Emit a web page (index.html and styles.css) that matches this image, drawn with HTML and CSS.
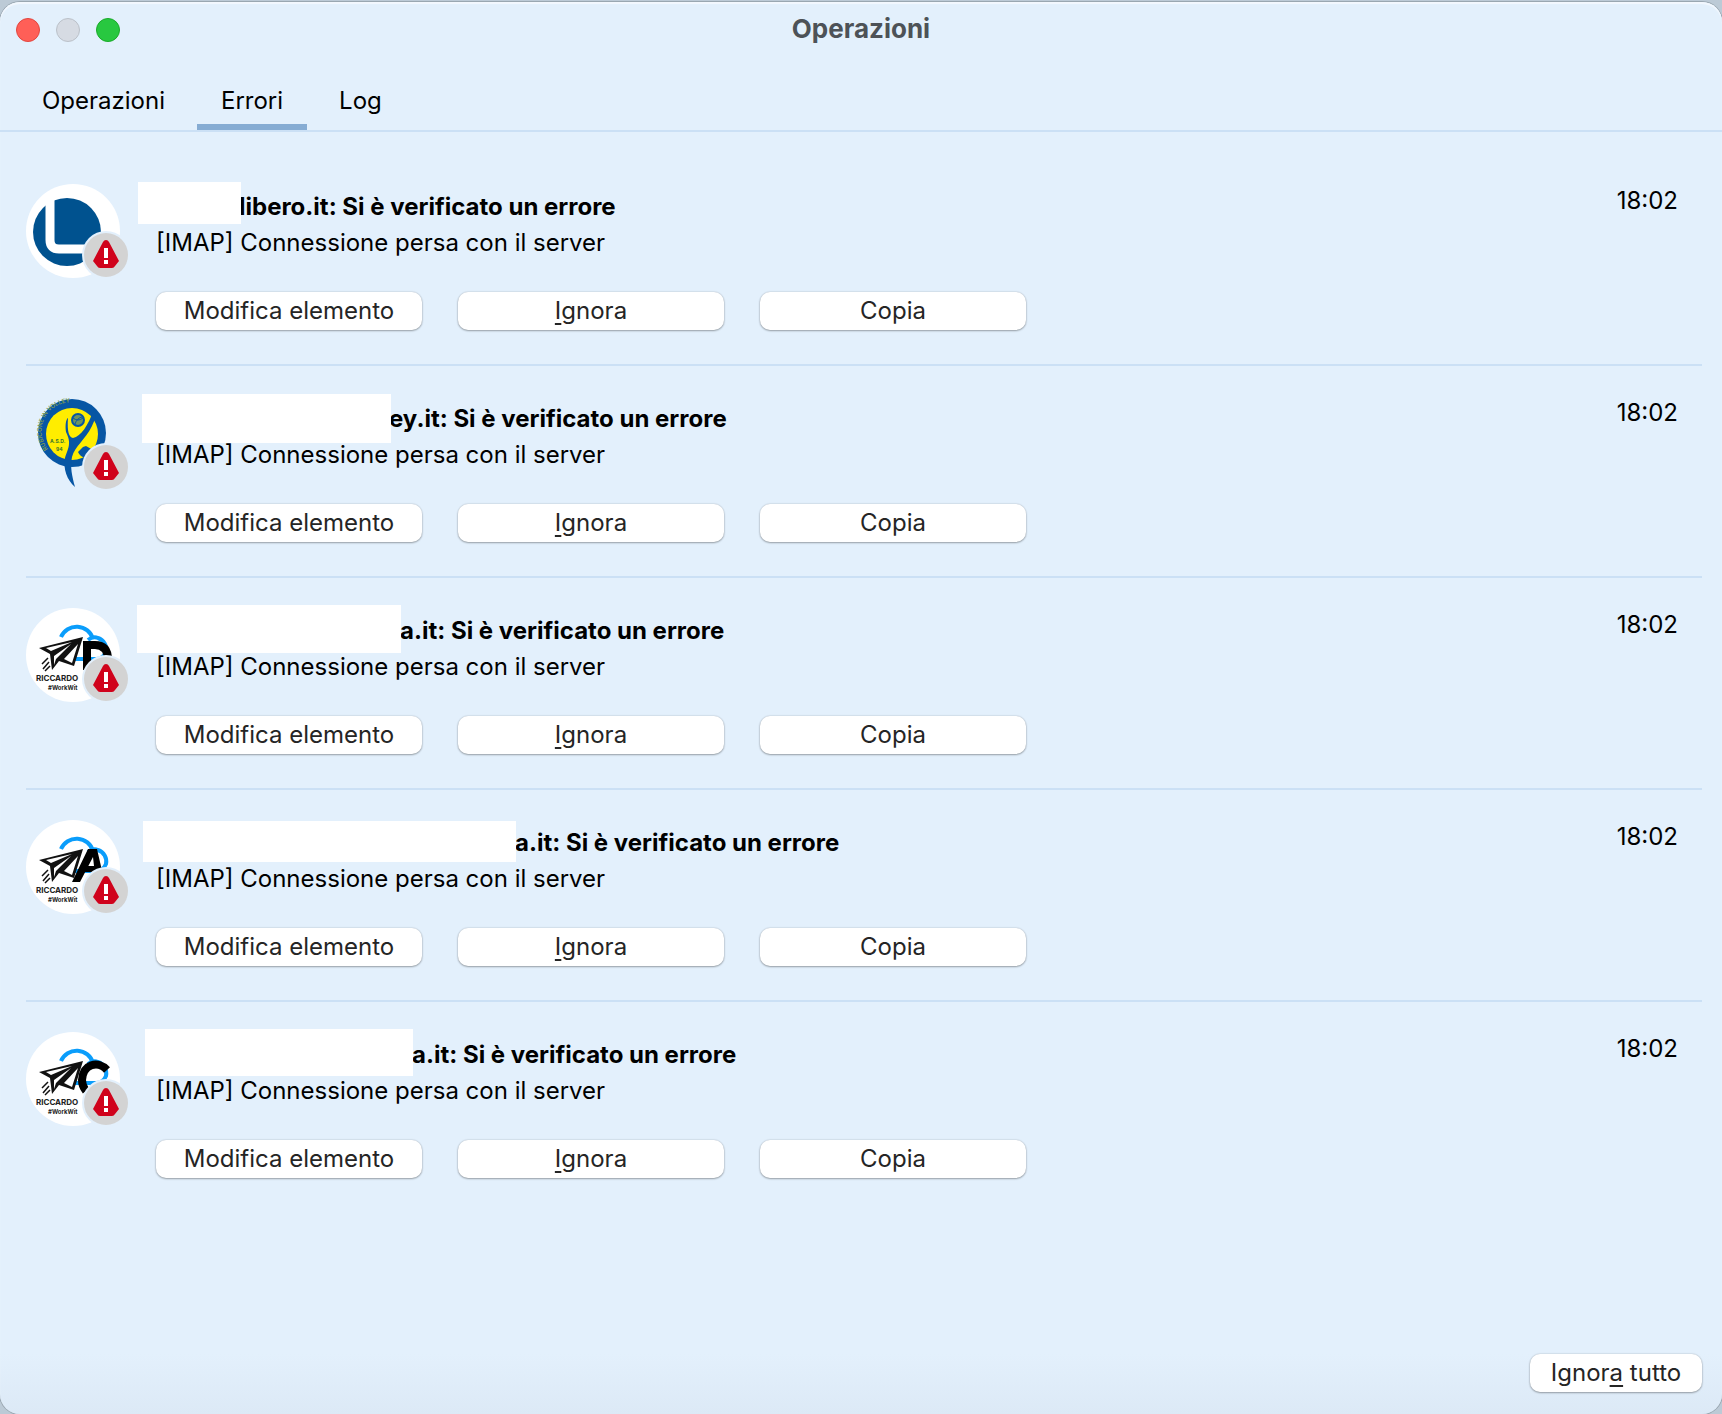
FILE: index.html
```
<!DOCTYPE html>
<html lang="it">

<head>
    <meta charset="UTF-8">
    <meta name="viewport" content="width=device-width, initial-scale=1.0">
    <title>Operazioni</title>
    <link rel="stylesheet" href="styles.css">
</head>

<body>
    <!-- Shared drawings, used by the rows below -->
    <svg class="defs" width="0" height="0" aria-hidden="true">
        <symbol id="alert" viewBox="0 0 48 48">
            <circle cx="24" cy="24" r="24" fill="#e3f0fc" />
            <circle cx="24" cy="24" r="22" fill="#d3d3d3" />
            <path d="M24 9q2 0 3 2l10 19-4 5q-1 2-3 2H18q-2 0-3-2l-4-5 10-19q1-2 3-2z" fill="#d0021b" />
            <path d="M22 17h4v10h-4zM22 29h4v4h-4z" fill="#fff" />
        </symbol>
        <symbol id="plane" viewBox="0 0 94 94">
            <circle cx="47" cy="47" r="47" fill="#fff" />
            <path d="M35 29A17 17 0 0 1 67 31M62 32Q67 28 72 30A12 12 0 0 1 80 44Q77 51 70 51H49" fill="none" stroke="#0a9dfb" stroke-width="4" />
            <path d="M57 29L13 40l11 6 2 16 7-9 15 5z" fill="#111" />
            <path d="M20 40l26-6-21 9zM28 48l17-12-15 15-2 6zM38 51l14-15-6 19z" fill="#fff" />
            <path d="M22 50l-6 6M23 54l-6 7M24 58l-5 5" stroke="#111" stroke-width="1.5" />
            <text x="10" y="73" font-size="8" font-weight="700">RICCARDO</text>
            <text x="22" y="82" font-size="6" font-weight="700">#WorkWit</text>
        </symbol>
    </svg>

    <div class="window">
        <header class="titlebar">
            <div class="lights">
                <button class="light close" aria-label="Chiudi"></button>
                <button class="light minimize" aria-label="Riduci" disabled></button>
                <button class="light zoom" aria-label="Ingrandisci"></button>
            </div>
            <h1>Operazioni</h1>
        </header>

        <nav class="tabs">
            <a href="#operazioni" class="tab">Operazioni</a>
            <a href="#errori" class="tab active">Errori</a>
            <a href="#log" class="tab">Log</a>
        </nav>

        <main class="errors">
            <article class="error">
                <div class="avatar">
                    <svg class="logo" viewBox="0 0 94 94">
                        <circle cx="47" cy="47" r="47" fill="#fff" />
                        <circle cx="41" cy="48" r="34" fill="#00528f" />
                        <path d="M24 10V56Q24 65 33 65H60" fill="none" stroke="#fff" stroke-width="9" />
                    </svg>
                    <svg class="badge"><use href="#alert" /></svg>
                </div>
                <div class="details">
                    <h2 class="title account-1">libero.it: Si è verificato un errore</h2>
                    <p>[IMAP] Connessione persa con il server</p>
                    <div class="actions">
                        <button class="btn">Modifica elemento</button>
                        <button class="btn"><u>I</u>gnora</button>
                        <button class="btn">Copia</button>
                    </div>
                </div>
                <time>18:02</time>
            </article>

            <article class="error">
                <div class="avatar">
                    <svg class="logo" viewBox="0 0 94 94">
                        <circle cx="46" cy="37" r="34" fill="#0756a4" />
                        <circle cx="46" cy="38" r="26" fill="#ffed00" />
                        <path id="ring" d="M22 53A28 28 0 0 1 66 17" fill="none" />
                        <text font-size="6" font-weight="600" fill="#7f9c52"><textPath href="#ring">RUBICONE IN VOLLEY</textPath></text>
                        <path d="M42 22C41 36 43 41 47 42 55 40 62 30 68 13 71 16 70 22 66 30 59 44 49 50 46 61 44 71 46 80 49 91 41 84 37 73 39 62 42 52 46 48 40 36 39 29 40 23 42 22z" fill="#0756a4" />
                        <path d="M60 62q-6-1-8-6l5-5 3-1 7 4v6z" fill="#0756a4" />
                        <circle cx="52" cy="24" r="6" fill="#6d9462" stroke="#0756a4" stroke-width="2" />
                        <path d="M47 22q5 4 10 0M49 28q2-6 7-7" fill="none" stroke="#0756a4" />
                        <text x="24" y="47" font-size="5" font-weight="700" fill="#38762f">A.S.D.</text>
                        <text x="30" y="55" font-size="5" font-weight="700" fill="#38762f">94</text>
                    </svg>
                    <svg class="badge"><use href="#alert" /></svg>
                </div>
                <div class="details">
                    <h2 class="title account-2">ey.it: Si è verificato un errore</h2>
                    <p>[IMAP] Connessione persa con il server</p>
                    <div class="actions">
                        <button class="btn">Modifica elemento</button>
                        <button class="btn"><u>I</u>gnora</button>
                        <button class="btn">Copia</button>
                    </div>
                </div>
                <time>18:02</time>
            </article>

            <article class="error">
                <div class="avatar">
                    <svg class="logo" viewBox="0 0 94 94">
                        <use href="#plane" />
                        <path d="M61 62V37H69Q82 37 82 52" fill="none" stroke="#000" stroke-width="8" />
                    </svg>
                    <svg class="badge"><use href="#alert" /></svg>
                </div>
                <div class="details">
                    <h2 class="title account-3">a.it: Si è verificato un errore</h2>
                    <p>[IMAP] Connessione persa con il server</p>
                    <div class="actions">
                        <button class="btn">Modifica elemento</button>
                        <button class="btn"><u>I</u>gnora</button>
                        <button class="btn">Copia</button>
                    </div>
                </div>
                <time>18:02</time>
            </article>

            <article class="error">
                <div class="avatar">
                    <svg class="logo" viewBox="0 0 94 94">
                        <use href="#plane" />
                        <path d="M46 62L62 29H71L77 55H69L67 37 54 62zM57 46H71V52H54z" fill="#000" />
                    </svg>
                    <svg class="badge"><use href="#alert" /></svg>
                </div>
                <div class="details">
                    <h2 class="title account-4">a.it: Si è verificato un errore</h2>
                    <p>[IMAP] Connessione persa con il server</p>
                    <div class="actions">
                        <button class="btn">Modifica elemento</button>
                        <button class="btn"><u>I</u>gnora</button>
                        <button class="btn">Copia</button>
                    </div>
                </div>
                <time>18:02</time>
            </article>

            <article class="error">
                <div class="avatar">
                    <svg class="logo" viewBox="0 0 94 94">
                        <use href="#plane" />
                        <path d="M81 38C72 28 57 32 56 48Q56 54 60 59" fill="none" stroke="#000" stroke-width="8" />
                    </svg>
                    <svg class="badge"><use href="#alert" /></svg>
                </div>
                <div class="details">
                    <h2 class="title account-5">a.it: Si è verificato un errore</h2>
                    <p>[IMAP] Connessione persa con il server</p>
                    <div class="actions">
                        <button class="btn">Modifica elemento</button>
                        <button class="btn"><u>I</u>gnora</button>
                        <button class="btn">Copia</button>
                    </div>
                </div>
                <time>18:02</time>
            </article>
        </main>

        <footer class="footer">
            <button class="btn btn-all">Ignor<u>a</u> tutto</button>
        </footer>
    </div>
</body>

</html>
```
FILE: styles.css
```
* {
    box-sizing: border-box;
}

body {
    margin: 0;
    padding-top: 2px;
    background-color: #bccad6;
    font-family: Inter, "Liberation Sans", sans-serif;
    font-size: 24px;
    line-height: 36px;
    color: #000;
}

.defs {
    position: absolute;
}

.window {
    display: flex;
    flex-direction: column;
    min-height: calc(100vh - 2px);
    background: linear-gradient(to top, #dce9f6, #e3f0fc 60px);
    border-radius: 20px;
    box-shadow: 0 0 0 1px #9aa7b1, inset 0 2px 1px #f3f8fe;
}

.titlebar {
    display: grid;
    grid-template-columns: 1fr auto 1fr;
    align-items: center;
    height: 56px;
    padding: 0 16px;
}

.titlebar h1 {
    margin: 0;
    padding-bottom: 2px;
    font-size: 26px;
    font-weight: 700;
    color: #4d5257;
}

.lights {
    display: flex;
    gap: 16px;
}

.light {
    width: 24px;
    height: 24px;
    padding: 0;
    border: 1px solid;
    border-radius: 50%;
}

.close {
    background-color: #ff5f57;
    border-color: #e2463f;
}

.minimize {
    background-color: #d6dbe3;
    border-color: #bbc1c9;
}

.zoom {
    background-color: #28c840;
    border-color: #1aab29;
}

.tabs {
    display: flex;
    gap: 8px;
    height: 74px;
    padding: 25px 18px 0;
    border-bottom: 2px solid #cbe0f5;
}

.tab {
    padding: 0 24px;
    color: #000;
    text-decoration: none;
}

.tab.active {
    border-bottom: 6px solid #86acd3;
}

.errors {
    flex: 1;
    padding: 22px 20px 0 26px;
}

.error {
    display: flex;
    height: 212px;
    padding-top: 30px;
    border-bottom: 2px solid #cbe0f5;
}

.error:last-child {
    border-bottom: none;
}

.avatar {
    position: relative;
    width: 130px;
}

.logo {
    display: block;
    width: 94px;
    height: 94px;
    fill: #222;
}

/* Warning badge over the lower right of the avatar */
.badge {
    position: absolute;
    left: 56px;
    top: 47px;
    width: 48px;
    height: 48px;
}

.details {
    flex: 1;
    padding-top: 5px;
}

.details p {
    margin: 0;
}

.title {
    position: relative;
    margin: 0;
    font-size: 24px;
    font-weight: 700;
    white-space: nowrap;
}

/* White block that hides the account name */
.title::before {
    content: "";
    position: absolute;
    background-color: #fff;
}

.account-1 {
    padding-left: 83px;
}

.account-1::before {
    left: -18px;
    top: -7px;
    width: 103px;
    height: 42px;
}

.account-2 {
    padding-left: 233px;
}

.account-2::before {
    left: -14px;
    top: -7px;
    width: 249px;
    height: 49px;
}

.account-3 {
    padding-left: 244px;
}

.account-3::before {
    left: -19px;
    top: -8px;
    width: 264px;
    height: 48px;
}

.account-4 {
    padding-left: 359px;
}

.account-4::before {
    left: -13px;
    top: -4px;
    width: 373px;
    height: 41px;
}

.account-5 {
    padding-left: 256px;
}

.account-5::before {
    left: -11px;
    top: -8px;
    width: 268px;
    height: 47px;
}

.actions {
    display: flex;
    gap: 36px;
    margin-top: 31px;
}

.btn {
    width: 266px;
    height: 38px;
    padding: 0;
    border: none;
    border-radius: 10px;
    background-color: #fff;
    box-shadow: 0 0 2px rgba(0, 0, 0, 0.2), 0 1px 2px rgba(0, 0, 0, 0.3);
    font-family: inherit;
    font-size: 24px;
    line-height: 38px;
    color: #252525;
}

.btn u {
    text-decoration-thickness: 2px;
    text-underline-offset: 4px;
    text-decoration-skip-ink: none;
}

.btn-all {
    width: 172px;
}

time {
    padding-right: 24px;
    line-height: 34px;
}

.footer {
    display: flex;
    justify-content: flex-end;
    padding: 0 20px 22px;
}
```
